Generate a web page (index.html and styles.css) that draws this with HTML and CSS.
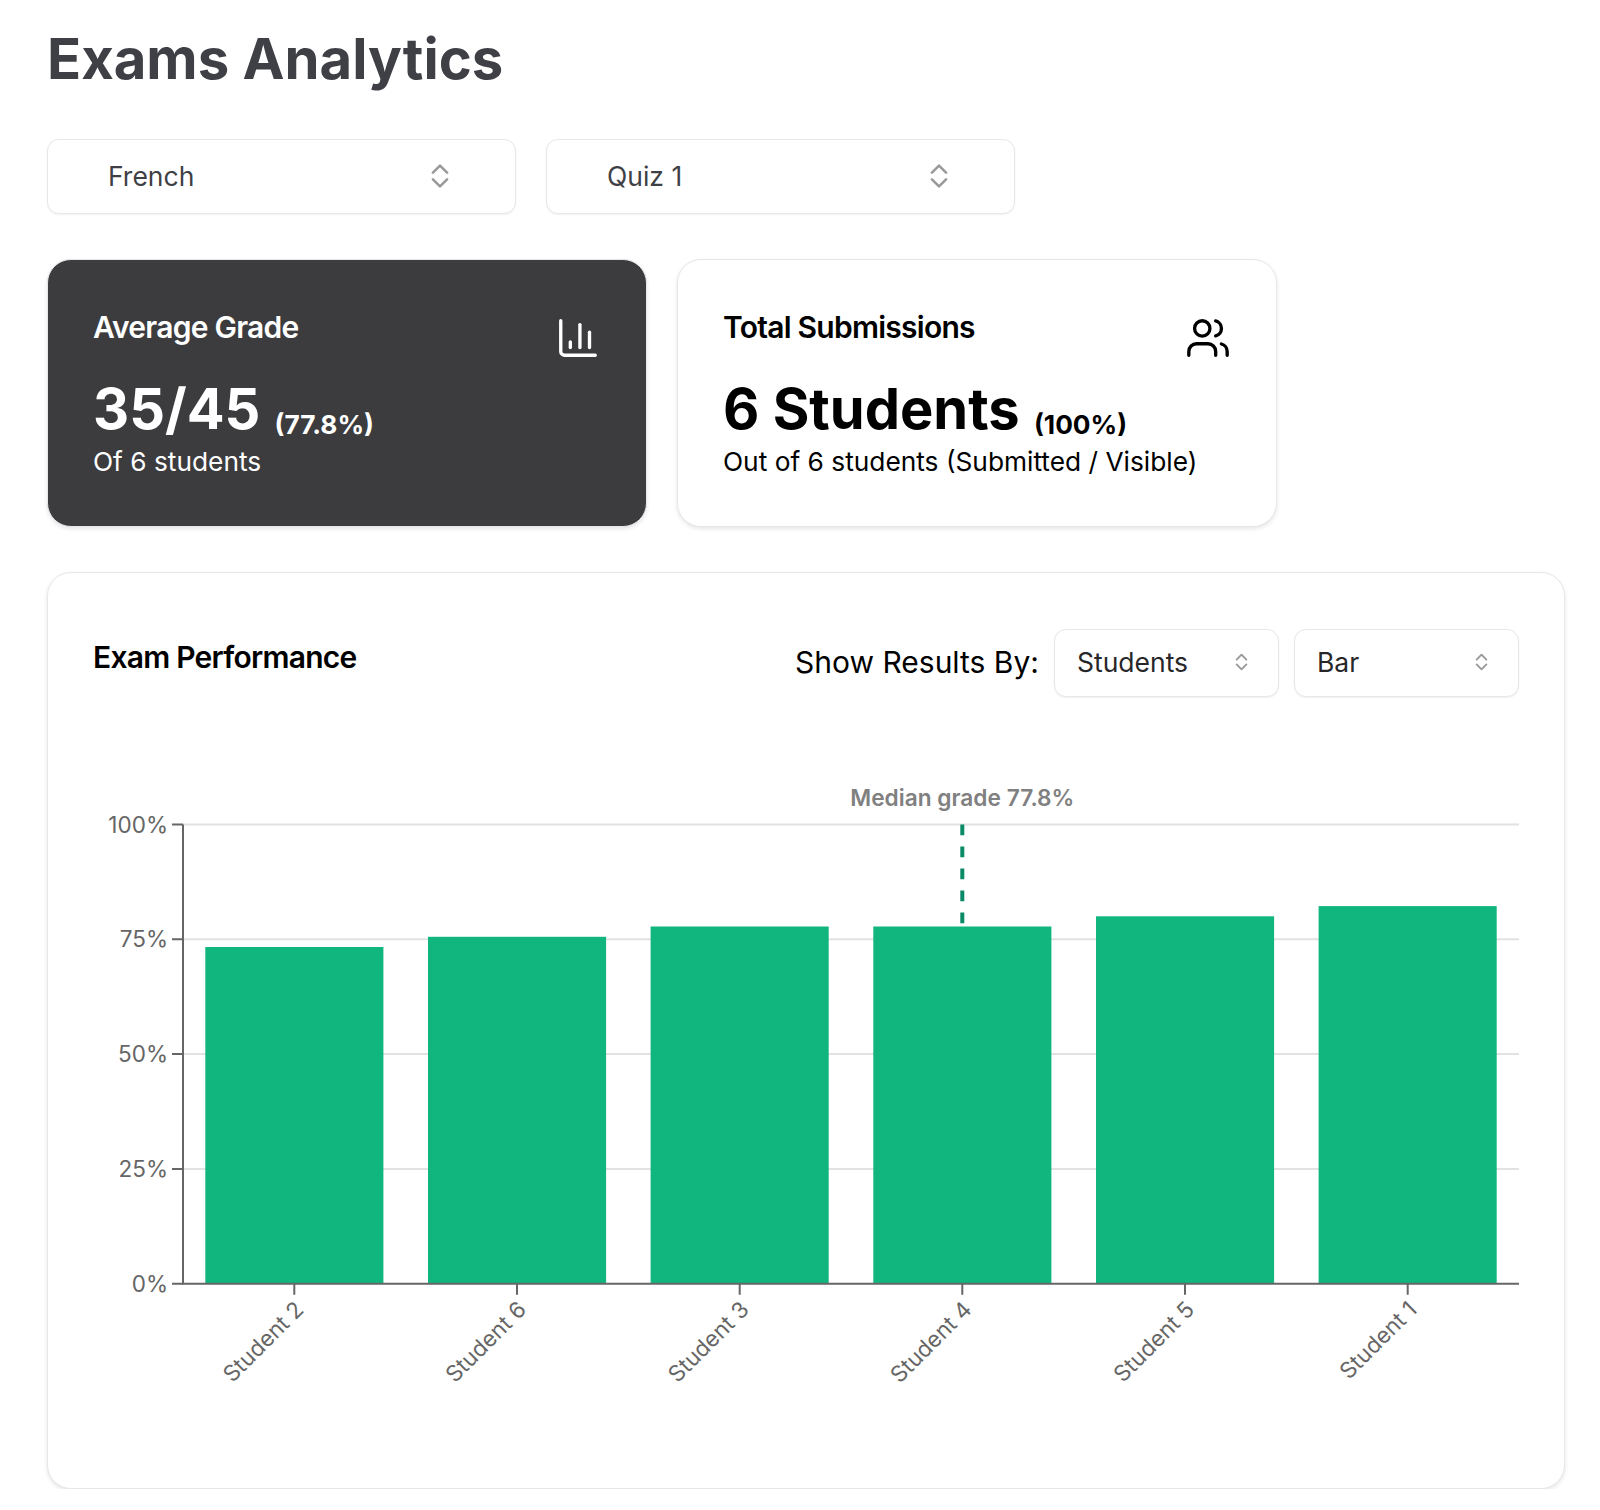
FILE: index.html
```html
<!DOCTYPE html>
<html lang="en">
<head>
    <meta charset="UTF-8">
    <meta name="viewport" content="width=device-width, initial-scale=1.0">
    <title>Exams Analytics</title>
    <link rel="stylesheet" href="styles.css">
</head>
<body>
    <h1 class="page-title">Exams Analytics</h1>

    <div class="filters">
        <div class="select select-large">
            <span>French</span>
            <svg class="chevrons" viewBox="0 0 16 22"><path d="M1.5 8L8 1.5L14.5 8M1.5 14L8 20.5L14.5 14"/></svg>
        </div>
        <div class="select select-large">
            <span>Quiz 1</span>
            <svg class="chevrons" viewBox="0 0 16 22"><path d="M1.5 8L8 1.5L14.5 8M1.5 14L8 20.5L14.5 14"/></svg>
        </div>
    </div>

    <div class="stats">
        <div class="stat-card stat-card-dark">
            <div class="stat-head">
                <h2 class="card-title">Average Grade</h2>
                <svg class="stat-icon" viewBox="0 0 24 24"><path d="M3 3v16a2 2 0 0 0 2 2h16"/><path d="M18 17V9"/><path d="M13 17V5"/><path d="M8 17v-3"/></svg>
            </div>
            <div class="stat-value">35/45 <small>(77.8%)</small></div>
            <div class="stat-note">Of 6 students</div>
        </div>
        <div class="stat-card">
            <div class="stat-head">
                <h2 class="card-title">Total Submissions</h2>
                <svg class="stat-icon" viewBox="0 0 24 24"><path d="M16 21v-2a4 4 0 0 0-4-4H6a4 4 0 0 0-4 4v2"/><circle cx="9" cy="7" r="4"/><path d="M22 21v-2a4 4 0 0 0-3-3.87"/><path d="M16 3.13a4 4 0 0 1 0 7.75"/></svg>
            </div>
            <div class="stat-value">6 Students <small>(100%)</small></div>
            <div class="stat-note">Out of 6 students (Submitted / Visible)</div>
        </div>
    </div>

    <div class="chart-card">
        <div class="chart-head">
            <h2 class="card-title">Exam Performance</h2>
            <div class="chart-controls">
                <span class="controls-label">Show Results By:</span>
                <div class="select select-small">
                    <span>Students</span>
                    <svg class="chevrons" viewBox="0 0 16 22"><path d="M2 8L8 2L14 8M2 14L8 20L14 14"/></svg>
                </div>
                <div class="select select-small">
                    <span>Bar</span>
                    <svg class="chevrons" viewBox="0 0 16 22"><path d="M2 8L8 2L14 8M2 14L8 20L14 14"/></svg>
                </div>
            </div>
        </div>

        <svg class="chart" width="1425" height="640" viewBox="0 0 1425 640">
            <g class="grid">
                <line x1="89" x2="1425" y1="44.5" y2="44.5"/>
                <line x1="89" x2="1425" y1="159.3" y2="159.3"/>
                <line x1="89" x2="1425" y1="274.1" y2="274.1"/>
                <line x1="89" x2="1425" y1="388.9" y2="388.9"/>
            </g>
            <g class="bars">
                <rect x="111.3" y="167" width="178.1" height="336.7"/>
                <rect x="334" y="156.8" width="178.1" height="346.9"/>
                <rect x="556.6" y="146.5" width="178.1" height="357.2"/>
                <rect x="779.3" y="146.5" width="178.1" height="357.2"/>
                <rect x="1002" y="136.3" width="178.1" height="367.4"/>
                <rect x="1224.6" y="126.1" width="178.1" height="377.6"/>
            </g>
            <g class="axis">
                <path d="M89 44.5V503.7H1425"/>
                <path d="M78 44.5H89M78 159.3H89M78 274.1H89M78 388.9H89M78 503.7H89"/>
                <path d="M200.3 503.7v11M423 503.7v11M645.7 503.7v11M868.3 503.7v11M1091 503.7v11M1313.7 503.7v11"/>
            </g>
            <g class="y-labels">
                <text x="74" y="52.5">100%</text>
                <text x="74" y="167.3">75%</text>
                <text x="74" y="282.1">50%</text>
                <text x="74" y="396.9">25%</text>
                <text x="74" y="511.7">0%</text>
            </g>
            <g class="x-labels">
                <text transform="translate(211 531) rotate(-45)">Student 2</text>
                <text transform="translate(433.7 531) rotate(-45)">Student 6</text>
                <text transform="translate(656.3 531) rotate(-45)">Student 3</text>
                <text transform="translate(879 531) rotate(-45)">Student 4</text>
                <text transform="translate(1101.7 531) rotate(-45)">Student 5</text>
                <text transform="translate(1324.3 531) rotate(-45)">Student 1</text>
            </g>
            <line class="median-line" x1="868.3" x2="868.3" y1="143.3" y2="44.5"/>
            <text class="median-label" x="868.3" y="25.7">Median grade 77.8%</text>
        </svg>
    </div>
</body>
</html>
```

FILE: styles.css
```css
* {
    margin: 0;
    padding: 0;
    box-sizing: border-box;
}

body {
    font-family: Inter, "Liberation Sans", sans-serif;
    background-color: #fff;
    color: #000;
    padding: 25px 35px 0 47px;
}

.page-title {
    font-size: 56.25px;
    line-height: 68px;
    font-weight: 700;
    color: #3f3f46;
}

.filters {
    display: flex;
    gap: 30px;
    margin-top: 46px;
}

.select {
    display: flex;
    justify-content: space-between;
    align-items: center;
    background-color: #fff;
    border: 1px solid #e5e7eb;
    border-radius: 12px;
    box-shadow: 0 1px 2px rgba(0,0,0,0.06);
    color: #3f3f46;
}

.select-large {
    width: 469px;
    height: 75px;
    padding: 0 66px 2px 60px;
    font-size: 26.5px;
}

.select-small {
    width: 225px;
    height: 68px;
    padding: 0 30px 2px 22px;
    font-size: 26.5px;
    color: #27272a;
}

.chevrons {
    fill: none;
    stroke: #999;
    stroke-width: 2.3;
    stroke-linecap: round;
    stroke-linejoin: round;
}

.select-large .chevrons {
    width: 18px;
    height: 24px;
}

.select-small .chevrons {
    width: 13px;
    height: 18px;
}

.stats {
    display: grid;
    grid-template-columns: 600px 600px;
    gap: 30px;
    margin-top: 45px;
}

.stat-card {
    height: 268px;
    padding: 44px 45px 0 45px;
    background-color: #fff;
    border: 1px solid #e5e7eb;
    border-radius: 24px;
    box-shadow: 0 2px 4px rgba(0,0,0,0.1);
}

.stat-card-dark {
    background-color: #3c3c3e;
    color: #fff;
}

.stat-head {
    display: flex;
    justify-content: space-between;
    align-items: flex-start;
    height: 79px;
}

.card-title {
    font-size: 30px;
    line-height: 46px;
    font-weight: 600;
    letter-spacing: -0.75px;
}

.stat-icon {
    width: 46px;
    height: 46px;
    margin-top: 11px;
    fill: none;
    stroke: currentColor;
    stroke-width: 1.75;
    stroke-linecap: round;
    stroke-linejoin: round;
}

.stat-value {
    font-size: 56px;
    line-height: 52px;
    font-weight: 700;
}

.stat-value small {
    font-size: 26.25px;
    line-height: 1;
    font-weight: 700;
    margin-left: 1px;
    vertical-align: -5px;
}

.stat-note {
    font-size: 26.3px;
    line-height: 32px;
    margin-top: 8px;
}

.chart-card {
    height: 917px;
    margin-top: 45px;
    padding: 44px 45px 0 46px;
    background-color: #fff;
    border: 1px solid #e5e7eb;
    border-radius: 24px;
    box-shadow: 0 2px 4px rgba(0,0,0,0.1);
}

.chart-head {
    display: flex;
    justify-content: space-between;
    align-items: flex-start;
    height: 161px;
    margin-top: 12px;
}

.chart-head .card-title {
    margin: 5px 0 0 -1px;
}

.chart-controls {
    display: flex;
    align-items: center;
    gap: 15px;
}

.controls-label {
    font-size: 30px;
    padding-bottom: 2px;
}

.chart {
    display: block;
    margin-top: -10px;
}

.grid line {
    stroke: #e2e2e2;
    stroke-width: 2;
}

.bars rect {
    fill: #11b67e;
}

.axis path {
    fill: none;
    stroke: #666;
    stroke-width: 2;
}

.y-labels text {
    font-size: 22.5px;
    fill: #666;
    text-anchor: end;
}

.x-labels text {
    font-size: 22.5px;
    fill: #666;
    text-anchor: end;
}

.median-line {
    stroke: #0b8a68;
    stroke-width: 4;
    stroke-dasharray: 10.7 11.3;
}

.median-label {
    font-size: 22.7px;
    font-weight: 600;
    fill: #808080;
    text-anchor: middle;
}
```
